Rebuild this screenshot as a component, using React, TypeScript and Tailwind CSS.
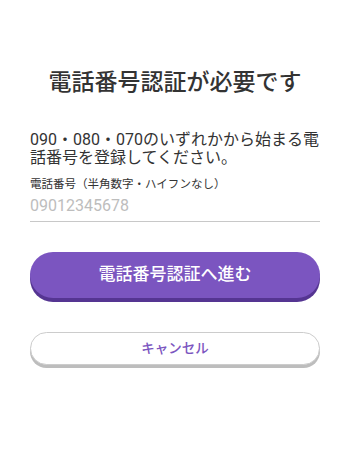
import React from "react";

export default function App() {
  return (
    <div
      className="w-[350px] h-[460px] bg-white text-[#333333]"
      style={{ fontFamily: 'Roboto, "Noto Sans CJK JP", sans-serif' }}
    >
      <div className="px-[30px] pt-[68px]">
        <h1 className="text-center text-[23px] leading-[30px] font-medium text-[#333333]">
          電話番号認証が必要です
        </h1>
        <p className="mt-[33px] text-[16px] leading-[18px] text-[#333333]">
          090・080・070のいずれかから始まる電話番号を登録してください。
        </p>
        <div className="mt-[9px] text-[11.5px] leading-[16px] text-[#333333]">
          電話番号（半角数字・ハイフンなし）
        </div>
        <input
          className="mt-[3px] block w-full border-b border-[#c8c8c8] bg-transparent pb-[4px] text-[16px] leading-[22px] outline-none placeholder:text-[#bdbdbd]"
          placeholder="09012345678"
        />
        <button className="mt-[30px] flex h-[46px] w-full items-center justify-center rounded-full bg-[#7b55c0] text-[17px] font-medium text-white shadow-[0_4px_0_#553592]">
          電話番号認証へ進む
        </button>
        <button className="mt-[34px] flex h-[33px] w-full items-center justify-center rounded-full border border-[#cccccc] bg-white text-[13.5px] font-medium text-[#7b55c0] shadow-[0_3px_0_#bdbdbd]">
          キャンセル
        </button>
      </div>
    </div>
  );
}
